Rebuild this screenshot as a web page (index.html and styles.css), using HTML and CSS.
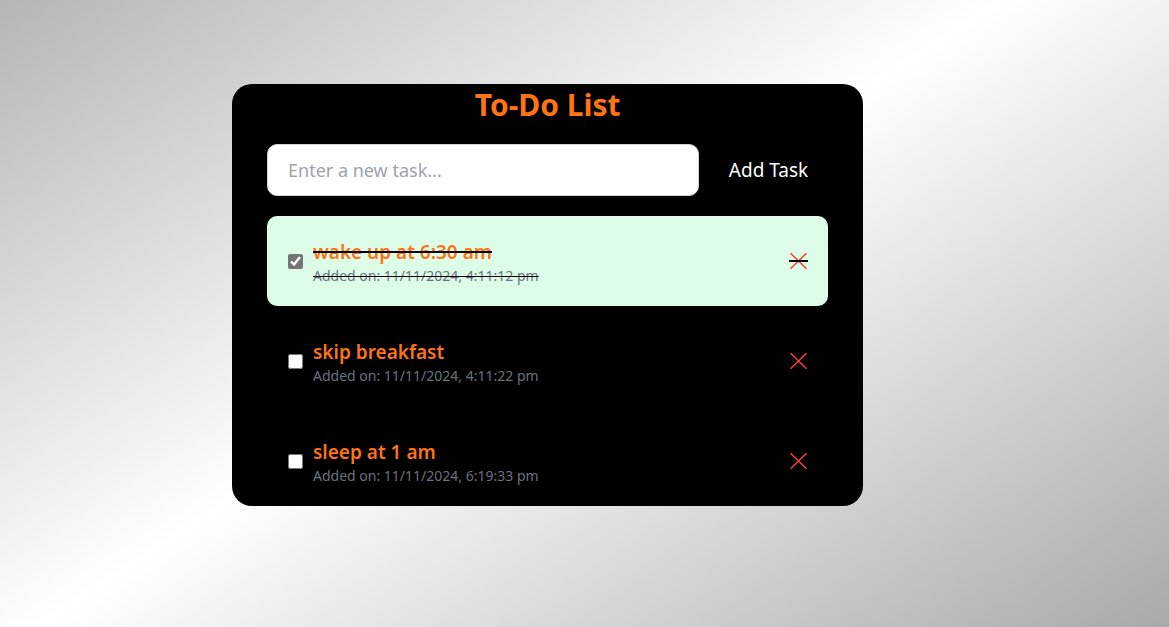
FILE: index.html
```html
<!DOCTYPE html>
<html lang="en">
<head>
<meta charset="utf-8">
<title>To-Do List</title>
<link rel="stylesheet" href="styles.css">
</head>
<body>
<main class="card">
  <h1 class="title">To-Do List</h1>
  <form class="entry">
    <input class="entry-input" type="text" placeholder="Enter a new task..." aria-label="New task">
    <button class="entry-add" type="button">Add Task</button>
  </form>
  <ul class="tasks">
    <li class="task task-done">
      <input class="check" type="checkbox" id="task-1" checked>
      <label class="info" for="task-1"><span class="name">wake up at 6:30 am</span><span class="date">Added on: 11/11/2024, 4:11:12 pm</span></label>
      <button class="remove" type="button" aria-label="Delete task"><svg width="19" height="18" viewBox="0 0 19 18"><path class="cross" d="M1.5 1.2 17.5 16.8M17.5 1.2 1.5 16.8"/><path class="strike" d="M0 9H19"/></svg></button>
    </li>
    <li class="task">
      <input class="check" type="checkbox" id="task-2">
      <label class="info" for="task-2"><span class="name">skip breakfast</span><span class="date">Added on: 11/11/2024, 4:11:22 pm</span></label>
      <button class="remove" type="button" aria-label="Delete task"><svg width="19" height="18" viewBox="0 0 19 18"><path class="cross" d="M1.5 1.2 17.5 16.8M17.5 1.2 1.5 16.8"/></svg></button>
    </li>
    <li class="task">
      <input class="check" type="checkbox" id="task-3">
      <label class="info" for="task-3"><span class="name">sleep at 1 am</span><span class="date">Added on: 11/11/2024, 6:19:33 pm</span></label>
      <button class="remove" type="button" aria-label="Delete task"><svg width="19" height="18" viewBox="0 0 19 18"><path class="cross" d="M1.5 1.2 17.5 16.8M17.5 1.2 1.5 16.8"/></svg></button>
    </li>
  </ul>
</main>
</body>
</html>
```
FILE: styles.css
```css
* {
  box-sizing: border-box;
  margin: 0;
  padding: 0;
}

body {
  min-height: 100vh;
  padding: 84px 232px;
  background: linear-gradient(147deg, #b5b4b9 0%, #ffffff 47%, #a9a8ad 100%);
  font-family: "Segoe UI", "Noto Sans", "Open Sans", sans-serif;
}

.card {
  width: 54vw;
  padding: 0 35px;
  border-radius: 20px;
  background: #000;
}

.title {
  padding-bottom: 18px;
  color: #ff7315;
  font-size: 30px;
  font-weight: 700;
  line-height: 42px;
  text-align: center;
}

.entry {
  display: flex;
  gap: 10px;
  margin-bottom: 20px;
}

.entry-input {
  flex: 1;
  min-width: 0;
  height: 52px;
  padding: 0 20px;
  border: 1px solid #d1d5db;
  border-radius: 10px;
  background: #fff;
  color: #000;
  font: inherit;
  font-size: 18px;
}

.entry-input::placeholder {
  color: #9ca3af;
}

.entry-add {
  padding: 0 20px;
  border: 0;
  background: transparent;
  color: #fff;
  font: inherit;
  font-size: 19px;
}

.tasks {
  display: grid;
  gap: 10px;
  list-style: none;
}

.task {
  display: flex;
  align-items: center;
  min-height: 90px;
  padding: 18px 20px 18px 21px;
  border-radius: 10px;
}

.task-done {
  background: #dcfce7;
}

.check {
  width: 15px;
  height: 15px;
  margin-right: 10px;
  accent-color: #757575;
}

.info {
  flex: 1;
  padding-top: 6px;
}

.name,
.date {
  display: block;
}

.name {
  color: #ff7315;
  font-size: 19px;
  font-weight: 600;
  line-height: 24px;
}

.date {
  color: #6b7280;
  font-size: 14px;
  line-height: 24px;
}

.task-done .name {
  text-decoration: line-through 2px #000;
}

.task-done .date {
  text-decoration: line-through 1px #000;
}

.remove {
  display: flex;
  border: 0;
  background: transparent;
}

.cross {
  fill: none;
  stroke: #ff3b3b;
  stroke-width: 1.5;
}

.strike {
  stroke: #000;
  stroke-width: 2;
}
```
